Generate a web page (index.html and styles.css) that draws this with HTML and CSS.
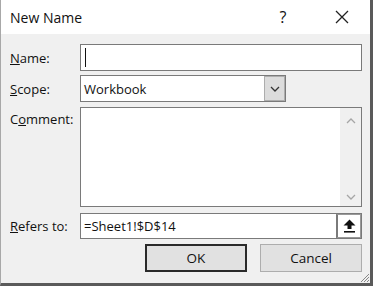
FILE: index.html
```html
<!DOCTYPE html>
<html lang="en">
<head>
  <meta charset="UTF-8">
  <title>New Name</title>
  <link rel="stylesheet" href="styles.css">
</head>
<body>

<div class="window">
  <div class="titlebar">
    <span class="title">New Name</span>
    <span class="help">?</span>
    <span class="close">
      <svg width="14" height="14" viewBox="0 0 14 14"><path d="M1 1 L13 13 M13 1 L1 13" stroke="#222" stroke-width="1.3" fill="none"/></svg>
    </span>
  </div>

  <div class="form">
    <div class="row name-row">
      <label class="label"><u>N</u>ame:</label>
      <div class="textbox"><span class="caret"></span></div>
    </div>

    <div class="row scope-row">
      <label class="label"><u>S</u>cope:</label>
      <div class="select">
        <span class="select-text">Workbook</span>
        <span class="drop">
          <svg width="10" height="6" viewBox="0 0 10 6"><path d="M1 1 L5 5 L9 1" stroke="#333" stroke-width="1.3" fill="none"/></svg>
        </span>
      </div>
    </div>

    <div class="row comment-row">
      <label class="label">C<u>o</u>mment:</label>
      <div class="textarea">
        <div class="scrollbar">
          <svg width="10" height="6" viewBox="0 0 10 6"><path d="M1 5 L5 1 L9 5" stroke="#a6a6a6" stroke-width="1.3" fill="none"/></svg>
          <svg width="10" height="6" viewBox="0 0 10 6"><path d="M1 1 L5 5 L9 1" stroke="#a6a6a6" stroke-width="1.3" fill="none"/></svg>
        </div>
      </div>
    </div>

    <div class="row refers-row">
      <label class="label"><u>R</u>efers to:</label>
      <div class="textbox refbox">
        <span class="ref-text">=Sheet1!$D$14</span>
        <span class="collapse">
          <svg width="13" height="14" viewBox="0 0 13 14"><path d="M6.5 0.5 L12.5 6.5 L8.5 6.5 L8.5 10 L4.5 10 L4.5 6.5 L0.5 6.5 Z" fill="#111"/><rect x="1" y="12" width="11" height="1.6" fill="#111"/></svg>
        </span>
      </div>
    </div>

    <div class="buttons">
      <button class="btn default">OK</button>
      <button class="btn">Cancel</button>
    </div>
  </div>

  <svg class="grip" width="10" height="10" viewBox="0 0 10 10"><path d="M9 1 L1 9 M9 4 L4 9 M9 7 L7 9" stroke="#888" stroke-width="1" fill="none"/></svg>
</div>

</body>
</html>
```

FILE: styles.css
```css
body { margin: 0; font-family: "Open Sans", "Noto Sans", Arial, sans-serif; font-size: 13px; color: #111; background: #fff; }
.window { position: relative; width: 369px; height: 283px; background: #f0f0f0; border-left: 1px solid #a8a8a8; border-right: 3px solid #5a5a5a; border-bottom: 3px solid #5a5a5a; }
.titlebar { height: 34px; background: #fff; display: flex; align-items: center; }
.title { font-size: 14px; margin-left: 9px; flex: 1; }
.help { font-size: 16px; width: 20px; text-align: center; margin-right: 42px; }
.close { width: 14px; height: 14px; margin-right: 21px; display: flex; }
.form { padding: 10px 8px 0 9px; }
.row { display: flex; align-items: center; }
.label { width: 70px; flex: none; }
.textbox, .select, .textarea { background: #fff; border: 1px solid #7a7a7a; box-sizing: border-box; }
.textbox { flex: 1; height: 27px; display: flex; align-items: center; }
.caret { width: 1px; height: 19px; background: #111; margin-left: 4px; }
.scope-row { margin-top: 4px; }
.select { width: 206px; height: 27px; display: flex; align-items: center; }
.select-text { flex: 1; padding-left: 3px; font-size: 13px; }
.drop { width: 21px; height: 25px; box-sizing: border-box; background: #dcdcdc; border: 1px solid #adadad; display: flex; align-items: center; justify-content: center; }
.comment-row { margin-top: 5px; align-items: flex-start; }
.comment-row .label { padding-top: 3px; }
.textarea { flex: 1; height: 100px; display: flex; justify-content: flex-end; }
.scrollbar { width: 21px; background: #f0f0f0; display: flex; flex-direction: column; justify-content: space-between; align-items: center; padding: 10px 0 6px; }
.refers-row { margin-top: 6px; }
.refbox { height: 26px; padding-left: 3px; }
.ref-text { flex: 1; font-size: 13px; }
.collapse { width: 25px; height: 24px; box-sizing: border-box; border: 1px solid #999; border-left: 2px solid #7a7a7a; background: #fff; display: flex; align-items: center; justify-content: center; }
.buttons { display: flex; justify-content: flex-end; gap: 13px; margin-top: 5px; }
.btn { width: 102px; height: 28px; font-family: inherit; font-size: 13.5px; color: #111; background: #e1e1e1; border: 1px solid #adadad; box-sizing: border-box; padding: 0; }
.btn.default { border: 2px solid #2a2a2a; }
.grip { position: absolute; right: 0; bottom: 0; }
```
